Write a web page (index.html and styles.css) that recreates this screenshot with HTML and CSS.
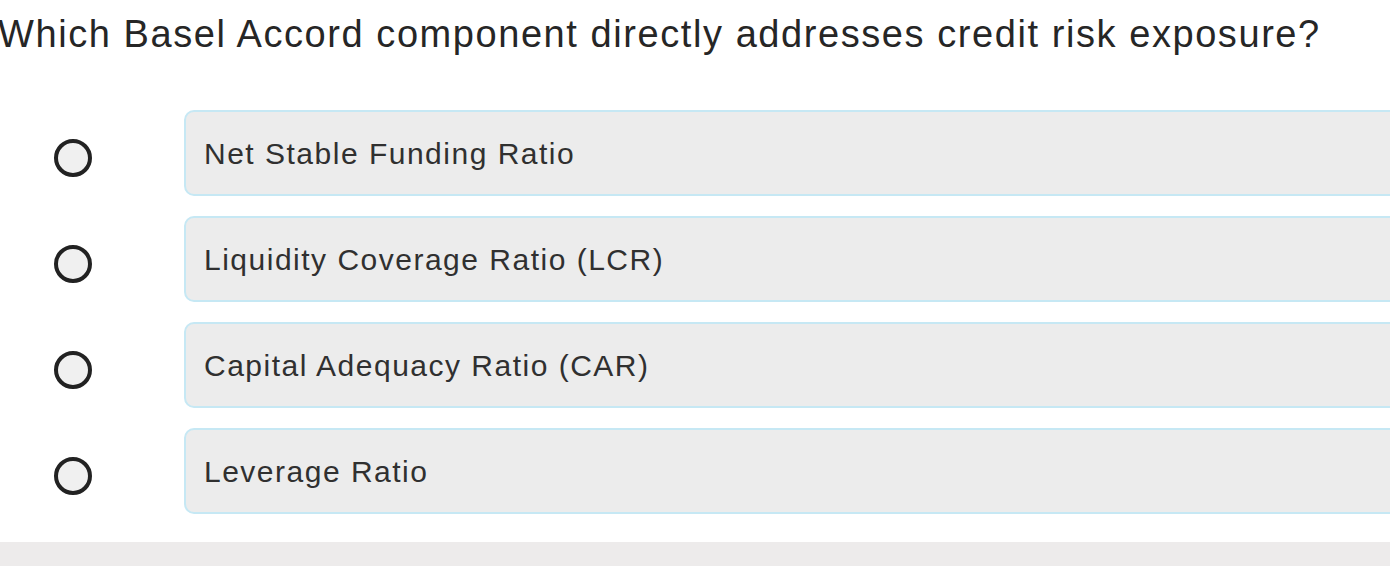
FILE: index.html
```html
<!DOCTYPE html>
<html lang="en">

    <head>
        <meta charset="UTF-8">
        <meta name="viewport" content="width=device-width, initial-scale=1.0">
        <title>Quiz</title>
        <link rel="stylesheet" href="styles.css">
    </head>

    <body>
        <div id="quiz">
            <h2 class="question">Which Basel Accord component directly addresses credit risk exposure?</h2>
            <form class="options">
                <label class="option">
                    <input class="radio" type="radio" name="answer" value="nsfr" />
                    <span class="answer">Net Stable Funding Ratio</span>
                </label>
                <label class="option">
                    <input class="radio" type="radio" name="answer" value="lcr" />
                    <span class="answer">Liquidity Coverage Ratio (LCR)</span>
                </label>
                <label class="option">
                    <input class="radio" type="radio" name="answer" value="car" />
                    <span class="answer">Capital Adequacy Ratio (CAR)</span>
                </label>
                <label class="option">
                    <input class="radio" type="radio" name="answer" value="lev" />
                    <span class="answer">Leverage Ratio</span>
                </label>
            </form>
        </div>
        <div id="footer"></div>
    </body>

</html>
```

FILE: styles.css
```css
*{
    margin:0;
    padding:0;
    box-sizing: border-box;
    font-family: "Liberation Sans", Arial, sans-serif;
}
body{
    background-color: white;
    overflow: hidden;
}
#quiz{
    width:100%;
}
.question{
    font-size: 38px;
    font-weight: normal;
    line-height: 44px;
    letter-spacing: 1.57px;
    color: rgb(38,38,38);
    padding-top: 12px;
    margin-left: -2px;
    white-space: nowrap;
}
.options{
    margin-top: 54px;
    display: flex;
    flex-direction: column;
    gap: 20px;
}
.option{
    display: flex;
    align-items: flex-start;
    cursor: pointer;
}
.radio{
    appearance: none;
    -webkit-appearance: none;
    width: 38px;
    height: 38px;
    margin-left: 54px;
    margin-right: 92px;
    margin-top: 29px;
    border: 4px solid rgb(34,34,34);
    border-radius: 50%;
    background-color: rgb(240,240,240);
    flex-shrink: 0;
}
.answer{
    display: flex;
    align-items: center;
    flex: 1;
    height: 86px;
    margin-right: -40px;
    padding-left: 18px;
    padding-top: 2px;
    background-color: rgb(236,236,236);
    border: 2px solid rgb(198,232,244);
    border-radius: 10px;
    font-size: 30px;
    line-height: 34px;
    letter-spacing: 1.5px;
    color: rgb(48,48,48);
}
#footer{
    margin-top: 28px;
    height: 40px;
    background-color: rgb(237,235,235);
}
```
